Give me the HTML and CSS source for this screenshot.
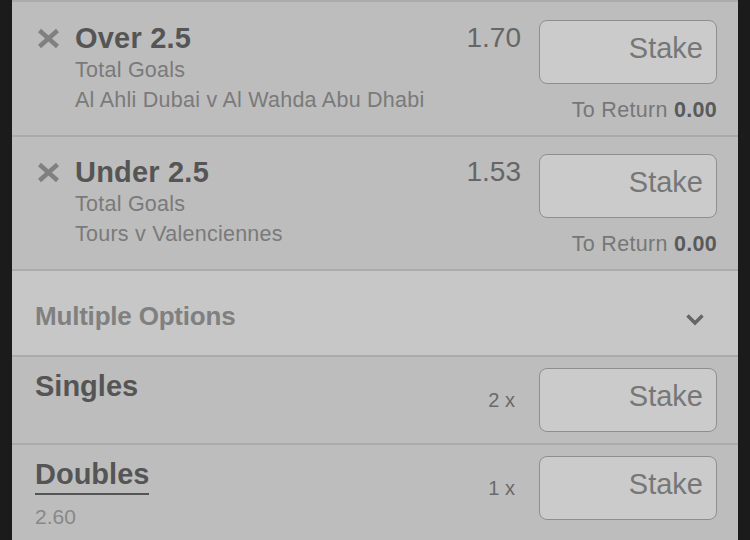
FILE: index.html
```html
<!DOCTYPE html>
<html lang="en">
<head>
    <meta charset="UTF-8">
    <meta name="viewport" content="width=device-width, initial-scale=1.0">
    <title>Bet Slip</title>
    <link rel="stylesheet" href="styles.css">
</head>
<body>
    <div class="slip">
        <div class="selection">
            <div class="sel-info">
                <svg class="remove" width="23" height="21" viewBox="0 0 23 21">
                    <path d="M2.5 2.5 L20.5 18.5 M20.5 2.5 L2.5 18.5" stroke="#808080" stroke-width="4.5" fill="none"/>
                </svg>
                <div class="sel-text">
                    <div class="sel-name">Over 2.5</div>
                    <div class="sel-sub">Total Goals</div>
                    <div class="sel-sub">Al Ahli Dubai v Al Wahda Abu Dhabi</div>
                </div>
            </div>
            <div class="sel-bet">
                <div class="bet-line">
                    <span class="odds">1.70</span>
                    <div class="stake">Stake</div>
                </div>
                <div class="to-return">To Return <b>0.00</b></div>
            </div>
        </div>

        <div class="selection">
            <div class="sel-info">
                <svg class="remove" width="23" height="21" viewBox="0 0 23 21">
                    <path d="M2.5 2.5 L20.5 18.5 M20.5 2.5 L2.5 18.5" stroke="#808080" stroke-width="4.5" fill="none"/>
                </svg>
                <div class="sel-text">
                    <div class="sel-name">Under 2.5</div>
                    <div class="sel-sub">Total Goals</div>
                    <div class="sel-sub">Tours v Valenciennes</div>
                </div>
            </div>
            <div class="sel-bet">
                <div class="bet-line">
                    <span class="odds">1.53</span>
                    <div class="stake">Stake</div>
                </div>
                <div class="to-return">To Return <b>0.00</b></div>
            </div>
        </div>

        <div class="multi-toggle">
            <span>Multiple Options</span>
            <svg class="chevron" width="20" height="13" viewBox="0 0 20 13">
                <polyline points="2.5,2.5 10,10 17.5,2.5" stroke="#666" stroke-width="3.5" fill="none"/>
            </svg>
        </div>

        <div class="multi-row">
            <div class="multi-info">
                <div class="multi-name">Singles</div>
            </div>
            <div class="multi-bet">
                <span class="count">2 x</span>
                <div class="stake">Stake</div>
            </div>
        </div>

        <div class="multi-row">
            <div class="multi-info">
                <div class="multi-name"><span class="underlined">Doubles</span></div>
                <div class="multi-odds">2.60</div>
            </div>
            <div class="multi-bet">
                <span class="count">1 x</span>
                <div class="stake">Stake</div>
            </div>
        </div>
    </div>
</body>
</html>
```

FILE: styles.css
```css
body {
    margin: 0;
    background-color: #1b1b1b; /* fundo escuro nas laterais */
    font-family: "Liberation Sans", Arial, sans-serif;
}

.slip {
    margin: 0 12px;
    background-color: #bdbdbd;
    border-top: 2px solid #ababab;
    padding-top: 1px;
    height: 537px;
    overflow: hidden;
}

/* linhas de seleção */
.selection {
    display: flex;
    justify-content: space-between;
    padding: 17px 21px 10px 25px;
    border-bottom: 2px solid #ababab;
}

.sel-info {
    display: flex;
    gap: 15px;
    padding-top: 1px;
}

.remove {
    margin-top: 7px;
    flex-shrink: 0;
}

.sel-name {
    font-size: 29px;
    line-height: 34px;
    font-weight: bold;
    color: #555;
    letter-spacing: 0.2px;
}

.sel-sub {
    font-size: 21.5px;
    line-height: 30px;
    color: #7a7a7a;
    letter-spacing: 0.25px;
}

.sel-bet {
    display: flex;
    flex-direction: column;
    align-items: flex-end;
}

.bet-line {
    display: flex;
    align-items: flex-start;
    gap: 18px;
}

.odds {
    font-size: 28px;
    line-height: 34px;
    margin-top: 1px;
    color: #666;
}

.stake {
    width: 178px;
    height: 64px;
    box-sizing: border-box;
    border: 1.5px solid #8f8f8f;
    border-radius: 8px;
    background-color: #cbcbcb;
    text-align: right;
    padding: 10px 13px 0 0;
    font-size: 29px;
    line-height: 34px;
    color: #777;
}

.to-return {
    margin-top: 11px;
    font-size: 21.5px;
    line-height: 30px;
    color: #777;
    letter-spacing: 0.3px;
}

.to-return b {
    color: #5a5a5a;
}

/* múltiplas */
.multi-toggle {
    display: flex;
    align-items: center;
    justify-content: space-between;
    height: 86px;
    box-sizing: border-box;
    padding: 6px 33px 0 23px;
    background-color: #c7c7c7;
    border-bottom: 2px solid #ababab;
    font-size: 26px;
    font-weight: bold;
    color: #808080;
}

.multi-toggle span {
    letter-spacing: -0.2px;
}

.chevron {
    margin-top: 7px;
}

.multi-row {
    display: flex;
    align-items: flex-start;
    justify-content: space-between;
    padding: 11px 21px 11px 23px;
    border-bottom: 2px solid #ababab;
}

.multi-info {
    padding-top: 1px;
}

.multi-name {
    font-size: 29px;
    line-height: 34px;
    font-weight: bold;
    color: #555;
}

.underlined {
    display: inline-block;
    border-bottom: 2px solid #555;
    padding-bottom: 2px;
    line-height: 34px;
}

.multi-odds {
    margin-top: 7px;
    font-size: 21px;
    line-height: 30px;
    color: #888;
}

.multi-bet {
    display: flex;
    align-items: center;
    gap: 24px;
}

.count {
    font-size: 20px;
    color: #6a6a6a;
}
```
